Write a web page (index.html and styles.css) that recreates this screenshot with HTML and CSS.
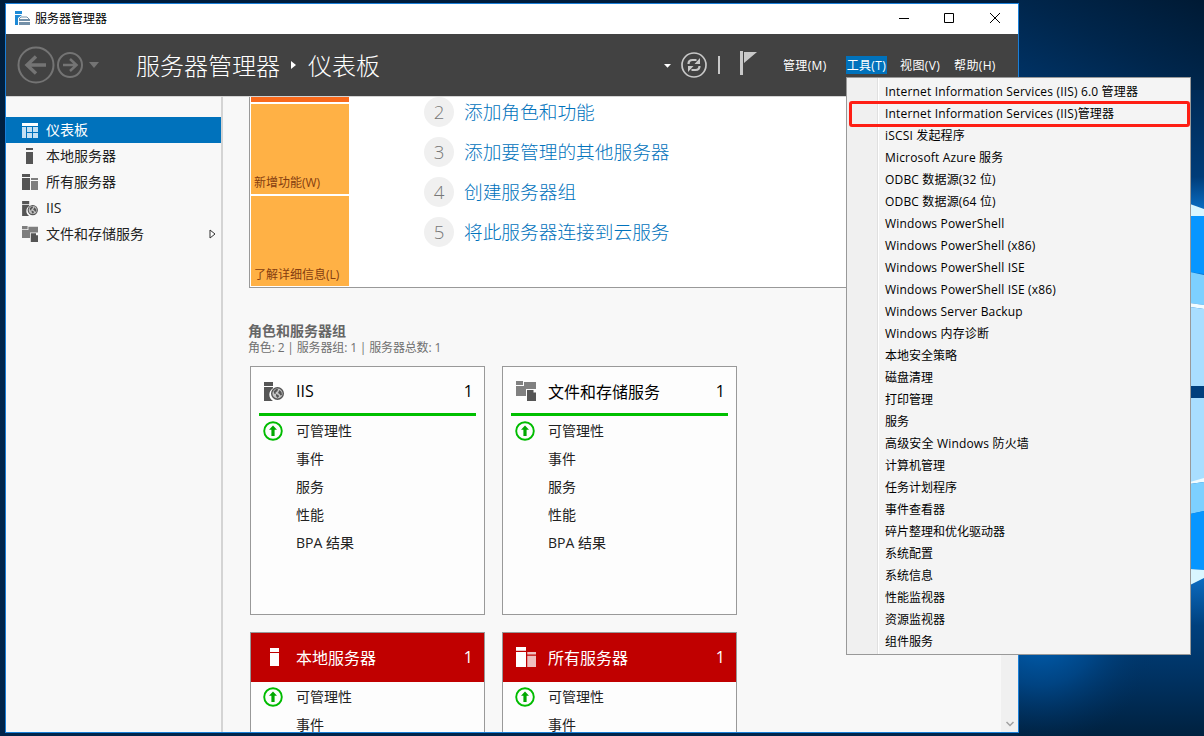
FILE: index.html
```html
<!DOCTYPE html>
<html lang="zh-CN">
<head>
<meta charset="UTF-8">
<meta name="viewport" content="width=device-width, initial-scale=1.0">
<title>服务器管理器</title>
<link rel="stylesheet" href="styles.css">
</head>
<body>
<svg width="0" height="0" class="symbols">
    <symbol id="icon-server" viewBox="0 0 16 16">
        <path d="M4 0h7v2H4zM4 4h7v12H4z"/>
    </symbol>
    <symbol id="icon-servers" viewBox="0 0 16 16">
        <path d="M0 0h8v3H0zM0 4h8v12H0z"/>
        <path d="M9 4h7v2H9zM9 7h7v9H9z" opacity=".75"/>
    </symbol>
    <symbol id="icon-iis" viewBox="0 0 20 19">
        <path d="M0 0h9v4H0zM0 5h9v1.2a7.4 7.4 0 0 0 0 12.8H0z"/>
        <circle cx="13.5" cy="11.500" r="5.800" fill="#c4c4c4" stroke="currentColor" stroke-width="1.400"/>
        <path d="M9.500 9.500l2.500-2.500h2l-.5 2-2 1.500.5 1-1.500.5zM15.500 8l2 2 .5 3-1.500.5-1-1.500-1.500-1zM12 12l2.500 1 .5 1.500-1.500 1.500-1.500-2z"/>
    </symbol>
    <symbol id="icon-files" viewBox="0 0 20 20">
        <path d="M0 0h7v4H0zM8 1h12v7H10v7H0V5h8z" opacity=".75"/>
        <path d="M11 9h6.500v2.500H20V20h-9z"/>
    </symbol>
    <symbol id="icon-up" viewBox="0 0 20 20">
        <circle cx="10" cy="10" r="8.800" fill="none" stroke="#00bc00" stroke-width="1.900"/>
        <path d="M10 4.500l4 4.300H11.600V15H8.400V8.800H6z" fill="#00a800"/>
    </symbol>
</svg>

<!-- 桌面壁纸 -->
<svg class="wallpaper" width="1204" height="736" viewBox="0 0 1204 736">
    <defs>
        <linearGradient id="sky" x1="0" y1="0" x2="0" y2="1">
            <stop offset="0" stop-color="#001c38"/>
            <stop offset=".1" stop-color="#002750"/>
            <stop offset=".24" stop-color="#003c78"/>
            <stop offset=".29" stop-color="#0b73cc"/>
            <stop offset=".78" stop-color="#0d6fc6"/>
            <stop offset=".85" stop-color="#00407d"/>
            <stop offset=".93" stop-color="#00305e"/>
            <stop offset="1" stop-color="#00213f"/>
        </linearGradient>
        <linearGradient id="side" x1="0" y1="0" x2="0" y2="1">
            <stop offset="0" stop-color="#001d3b"/>
            <stop offset=".5" stop-color="#00264d"/>
            <stop offset="1" stop-color="#00244a"/>
        </linearGradient>
        <linearGradient id="top" x1="0" y1="1" x2="1" y2="0">
            <stop offset="0" stop-color="#003468"/>
            <stop offset=".5" stop-color="#00264c"/>
            <stop offset="1" stop-color="#001a34"/>
        </linearGradient>
        <radialGradient id="glow" cx="1040" cy="625" r="120" gradientUnits="userSpaceOnUse">
            <stop offset="0" stop-color="#0068c0"/>
            <stop offset=".5" stop-color="#004c92" stop-opacity=".7"/>
            <stop offset="1" stop-color="#003060" stop-opacity="0"/>
        </radialGradient>
    </defs>
    <rect width="1204" height="736" fill="url(#side)"/>
    <rect x="1018" width="186" height="736" fill="url(#sky)"/>
    <rect x="1018" width="186" height="90" fill="url(#top)"/>
    <rect x="1018" y="640" width="186" height="96" fill="url(#glow)"/>
    <path d="M1190 204l14 5v8l-14-1z" fill="#d9f6ff"/>
    <path d="M1190 216h14v58l-14-2z" fill="#0796ff"/>
    <path d="M1190 272l14 3v30l-14-2z" fill="#7dd0ff"/>
    <path d="M1190 303l14 2v4l-14-2z" fill="#f2fcff"/>
    <path d="M1190 307l14 2v77h-14z" fill="#a9deff"/>
    <path d="M1190 386h14v12h-14z" fill="#003f7d"/>
    <path d="M1190 398h14v82l-14 3z" fill="#a9deff"/>
    <path d="M1190 482l14-4v4l-14 2z" fill="#f2fcff"/>
    <path d="M1190 484l14-2v29l-14 3z" fill="#7dd0ff"/>
    <path d="M1190 514l14-3v59l-14-1z" fill="#0796ff"/>
    <path d="M1190 569l14 1v8l-14 7z" fill="#d9f6ff"/>
</svg>

<div class="window">
    <div class="titlebar">
        <svg class="app-icon" width="15" height="14" viewBox="0 0 15 14">
            <path d="M0 0h7v3H0zM0 4h7L3 7v7H0z" fill="#1e8ad6"/>
            <path d="M4 8l2-2h6l2 2" fill="none" stroke="#7390a8"/>
            <path d="M4 8h11v2H4zM4 11h11v3H4z" fill="#7390a8"/>
        </svg>
        <span class="title">服务器管理器</span>
        <svg class="window-buttons" width="102" height="12" viewBox="0 0 102 12" fill="none" stroke="#000">
            <path d="M0 6.500h10M45.500 1.500h9v9h-9zM91 1l10 10M101 1L91 11"/>
        </svg>
    </div>

    <div class="header">
        <svg class="nav-buttons" width="84" height="40" viewBox="0 0 84 40" fill="none" stroke="#747474">
            <circle cx="20" cy="20" r="17.500" stroke-width="2"/>
            <path d="M30 20H12M20 11.500L11 20l9 8.500" stroke-width="3.400"/>
            <circle cx="54" cy="20" r="12" stroke-width="2"/>
            <path d="M47 20h13M54 14l6.500 6-6.500 6" stroke-width="2.500"/>
            <path d="M73 17h10l-5 6z" fill="#747474" stroke="none"/>
        </svg>
        <div class="breadcrumb">
            <span>服务器管理器</span>
            <svg width="6" height="8" viewBox="0 0 6 8"><path d="M0 0l5 4-5 4z" fill="#fff"/></svg>
            <span>仪表板</span>
        </div>
        <svg class="tools" width="100" height="40" viewBox="0 0 100 40">
            <path d="M4 19h7l-3.500 3.800z" fill="#fff"/>
            <circle cx="34" cy="20" r="12" fill="none" stroke="#c8c8c8" stroke-width="1.700"/>
            <path d="M28.500 19c0-3 2-4 4-4h4M39.500 21c0 3-2 4-4 4h-4" fill="none" stroke="#c8c8c8" stroke-width="2.200"/>
            <path d="M34.500 19h5.500v-6zM33.500 21H28v6z" fill="#c8c8c8"/>
            <path d="M58 11h2v18h-2z" fill="#c8c8c8"/>
            <path d="M80 6h3v24h-3zM84 7h13L84 18z" fill="#c8c8c8"/>
        </svg>
        <div class="menubar">
            <span>管理(M)</span>
            <span class="open">工具(T)</span>
            <span>视图(V)</span>
            <span>帮助(H)</span>
        </div>
    </div>

    <div class="body">
        <div class="sidebar">
            <div class="nav-item active">
                <svg width="16" height="15" viewBox="0 0 16 15"><path d="M0 0h16v3H0z" fill="#fff"/><path d="M0 4h4v11H0zM5 4h5v5H5zM11 4h5v5h-5zM5 10h5v5H5zM11 10h5v5h-5z" fill="#c5e0f3"/></svg>
                <span>仪表板</span>
            </div>
            <div class="nav-item">
                <svg width="16" height="16"><use href="#icon-server"/></svg>
                <span>本地服务器</span>
            </div>
            <div class="nav-item">
                <svg width="16" height="16"><use href="#icon-servers"/></svg>
                <span>所有服务器</span>
            </div>
            <div class="nav-item">
                <svg width="16" height="15"><use href="#icon-iis"/></svg>
                <span>IIS</span>
            </div>
            <div class="nav-item">
                <svg width="16" height="16"><use href="#icon-files"/></svg>
                <span>文件和存储服务</span>
                <svg class="expand" width="7" height="10" viewBox="0 0 7 10"><path d="M1 1l5 4-5 4z" fill="#fff" stroke="#333"/></svg>
            </div>
        </div>

        <div class="main">
            <div class="welcome">
                <div class="orange">
                    <div class="block quick"></div>
                    <div class="block">新增功能(W)</div>
                    <div class="block">了解详细信息(L)</div>
                </div>
                <div class="steps">
                    <div class="step"><span class="num">2</span><span class="link">添加角色和功能</span></div>
                    <div class="step"><span class="num">3</span><span class="link">添加要管理的其他服务器</span></div>
                    <div class="step"><span class="num">4</span><span class="link">创建服务器组</span></div>
                    <div class="step"><span class="num">5</span><span class="link">将此服务器连接到云服务</span></div>
                </div>
            </div>

            <div class="group-title">角色和服务器组</div>
            <div class="group-info">角色: 2 | 服务器组: 1 | 服务器总数: 1</div>

            <div class="tiles">
                <div class="tile">
                    <div class="tile-head">
                        <svg width="20" height="19"><use href="#icon-iis"/></svg>
                        <span>IIS</span>
                        <span class="count">1</span>
                    </div>
                    <ul>
                        <li><svg width="20" height="20"><use href="#icon-up"/></svg>可管理性</li>
                        <li>事件</li>
                        <li>服务</li>
                        <li>性能</li>
                        <li>BPA 结果</li>
                    </ul>
                </div>
                <div class="tile">
                    <div class="tile-head">
                        <svg width="20" height="20"><use href="#icon-files"/></svg>
                        <span>文件和存储服务</span>
                        <span class="count">1</span>
                    </div>
                    <ul>
                        <li><svg width="20" height="20"><use href="#icon-up"/></svg>可管理性</li>
                        <li>事件</li>
                        <li>服务</li>
                        <li>性能</li>
                        <li>BPA 结果</li>
                    </ul>
                </div>
                <div class="tile alert">
                    <div class="tile-head">
                        <svg width="20" height="18" viewBox="0 0 20 18"><path d="M6 0h9v4H6zM6 5h9v13H6z"/></svg>
                        <span>本地服务器</span>
                        <span class="count">1</span>
                    </div>
                    <ul>
                        <li><svg width="20" height="20"><use href="#icon-up"/></svg>可管理性</li>
                        <li>事件</li>
                    </ul>
                </div>
                <div class="tile alert">
                    <div class="tile-head">
                        <svg width="20" height="20"><use href="#icon-servers"/></svg>
                        <span>所有服务器</span>
                        <span class="count">1</span>
                    </div>
                    <ul>
                        <li><svg width="20" height="20"><use href="#icon-up"/></svg>可管理性</li>
                        <li>事件</li>
                    </ul>
                </div>
            </div>
        </div>

        <div class="scrollbar">
            <svg width="8" height="6" viewBox="0 0 8 6"><path d="M.5 1L4 4.500 7.500 1" fill="none" stroke="#a0a0a0" stroke-width="1.500"/></svg>
        </div>
    </div>
</div>

<!-- 工具菜单 -->
<ul class="dropdown">
    <li class="en">Internet Information Services (IIS) 6.0 管理器</li>
    <li class="en marked">Internet Information Services (IIS)管理器</li>
    <li class="en">iSCSI 发起程序</li>
    <li class="en">Microsoft Azure 服务</li>
    <li class="en">ODBC 数据源(32 位)</li>
    <li class="en">ODBC 数据源(64 位)</li>
    <li class="en">Windows PowerShell</li>
    <li class="en">Windows PowerShell (x86)</li>
    <li class="en">Windows PowerShell ISE</li>
    <li class="en">Windows PowerShell ISE (x86)</li>
    <li class="en">Windows Server Backup</li>
    <li class="en">Windows 内存诊断</li>
    <li>本地安全策略</li>
    <li>磁盘清理</li>
    <li>打印管理</li>
    <li>服务</li>
    <li class="en">高级安全 Windows 防火墙</li>
    <li>计算机管理</li>
    <li>任务计划程序</li>
    <li>事件查看器</li>
    <li>碎片整理和优化驱动器</li>
    <li>系统配置</li>
    <li>系统信息</li>
    <li>性能监视器</li>
    <li>资源监视器</li>
    <li>组件服务</li>
</ul>
</body>
</html>
```
FILE: styles.css
```css
* {
    box-sizing: border-box;
}

body {
    margin: 0;
    height: 736px;
    overflow: hidden;
    background-color: #00244a;
    font-family: "Open Sans", "Noto Sans CJK SC", sans-serif;
    font-size: 12px;
    color: #000;
}

ul {
    list-style: none;
    margin: 0;
    padding: 0;
}

svg {
    flex: none;
    display: block;
}

.symbols {
    position: absolute;
}

.wallpaper {
    position: absolute;
    top: 0;
    left: 0;
}

.window {
    position: absolute;
    top: 3px;
    left: 5px;
    width: 1014px;
    height: 730px;
    border: 1px solid #1a7fd8;
    background-color: #f8f8f8;
    display: flex;
    flex-direction: column;
}

.titlebar {
    height: 30px;
    background-color: #fff;
    display: flex;
    align-items: center;
    padding: 0 17px 2px 9px;
}

.title {
    margin-left: 5px;
}

.window-buttons {
    margin-left: auto;
}

.header {
    height: 63px;
    background-color: #424242;
    border-bottom: 1px solid #d4d4d4;
    display: flex;
    align-items: center;
    color: #fff;
    padding-left: 10px;
}

.breadcrumb {
    display: flex;
    align-items: center;
    margin-left: 36px;
    font-size: 24px;
    font-weight: 300;
    line-height: 40px;
}

.breadcrumb span {
    padding-top: 2px;
}

.breadcrumb svg {
    margin: 0 11px;
}

.tools {
    margin-left: 280px;
}

.menubar {
    display: flex;
    margin-left: 22px;
    gap: 12px;
}

.menubar span {
    height: 18px;
    line-height: 20px;
    padding: 0 1px;
    letter-spacing: 0.35px;
    white-space: nowrap;
}

.menubar .open {
    background-color: #0072bc;
    margin-left: 6px;
}

.body {
    flex: 1;
    display: flex;
    min-height: 0;
}

.sidebar {
    width: 217px;
    border-right: 2px solid #d4d4d4;
    padding-top: 20px;
}

.nav-item {
    display: flex;
    align-items: center;
    height: 26px;
    padding: 0 5px 0 16px;
    font-size: 14px;
    color: #222;
}

.nav-item svg {
    fill: #555;
    color: #555;
}

.nav-item span {
    margin-left: 8px;
    padding-bottom: 2px;
}

.nav-item .expand {
    margin-left: auto;
}

.nav-item.active {
    background-color: #0072bc;
    color: #fff;
}

.main {
    flex: 1;
    overflow: hidden;
    padding-left: 25px;
}

.welcome {
    height: 191px;
    margin-left: 1px;
    background-color: #fff;
    border: 1px solid #999;
    border-top: none;
    display: flex;
    padding-left: 1px;
}

.orange {
    width: 98px;
}

.block {
    height: 90px;
    margin-bottom: 2px;
    padding: 0 3px 3px;
    background-color: #ffb145;
    color: #843d10;
    display: flex;
    align-items: flex-end;
    white-space: nowrap;
}

.block.quick {
    height: 5px;
    background-color: #f96a1c;
}

.steps {
    margin-left: 75px;
}

.step {
    display: flex;
    align-items: center;
    height: 30px;
    margin-bottom: 10px;
    font-size: 18.7px;
    font-weight: 300;
    color: #0072bc;
}

.link {
    padding-bottom: 3px;
}

.num {
    width: 30px;
    height: 30px;
    line-height: 30px;
    margin-right: 10px;
    border-radius: 50%;
    background-color: #f0f0f0;
    color: #777;
    text-align: center;
}

.group-title {
    margin-top: 34px;
    font-size: 14px;
    font-weight: bold;
    line-height: 17px;
    color: #666;
}

.group-info {
    margin-top: 1px;
    line-height: 16px;
    letter-spacing: -0.15px;
    color: #707070;
}

.tiles {
    display: grid;
    grid-template-columns: 235px 235px;
    gap: 17px;
    margin: 10px 0 0 2px;
}

.tile {
    height: 249px;
    border: 1px solid #999;
    background-color: #fdfdfd;
}

.tile-head {
    display: flex;
    align-items: center;
    height: 49px;
    margin: 0 8px;
    padding: 2px 3px 0 5px;
    border-bottom: 3px solid #00c000;
    font-size: 16px;
}

.tile-head svg {
    fill: #555;
    color: #555;
    margin-right: 12px;
}

.count {
    margin-left: auto;
}

.tile ul {
    color: #222;
    font-size: 14px;
    padding-top: 1px;
}

.tile li {
    height: 28px;
    line-height: 28px;
    display: flex;
    align-items: center;
    padding-left: 45px;
}

.tile li svg {
    margin: -1px 13px 0 -33px;
}

.tile.alert .tile-head {
    height: 49px;
    margin: 0;
    padding: 0 11px 1px 13px;
    background-color: #c00000;
    border-bottom: none;
    color: #fff;
}

.tile.alert .tile-head svg {
    fill: #fff;
}

.scrollbar {
    width: 17px;
    background-color: #f0f0f0;
    display: flex;
    align-items: flex-end;
    justify-content: center;
    padding-bottom: 5px;
}

.dropdown {
    position: absolute;
    top: 77px;
    left: 846px;
    width: 345px;
    height: 578px;
    padding: 3px 2px 1px;
    border: 1px solid #999;
    background: linear-gradient(to right, #f0f0f0 30px, #e0e0e0 30px, #e0e0e0 31px, #fff 31px, #fff 32px, #f4f4f4 32px);
}

.dropdown li {
    position: relative;
    height: 22px;
    line-height: 22px;
    padding-left: 36px;
    white-space: nowrap;
}

.dropdown .en {
    letter-spacing: 0.17px;
}

.marked::after {
    content: "";
    box-sizing: border-box;
    position: absolute;
    top: -2px;
    left: 0;
    width: 341px;
    height: 26px;
    border: 3px solid #fe1e14;
    border-radius: 3px;
}
```
